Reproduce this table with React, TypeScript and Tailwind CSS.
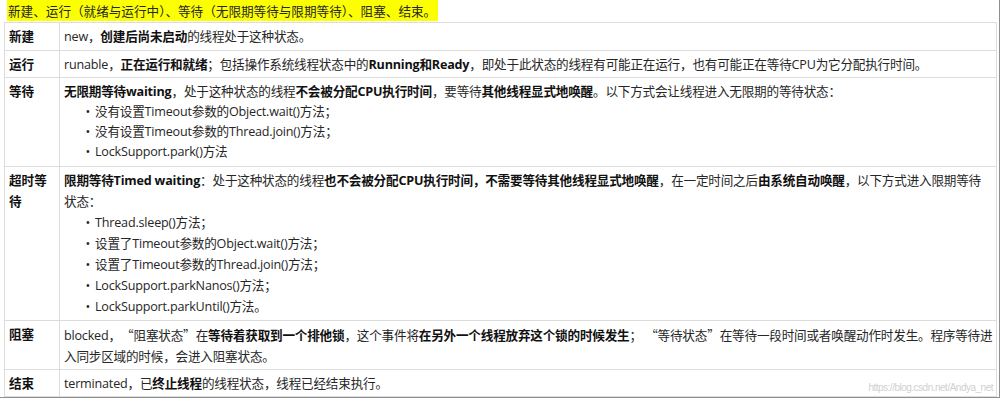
import React from "react";

const font = {
  fontFamily: '"Open Sans", "Noto Sans CJK SC", sans-serif',
};
const cjk = { fontFamily: '"Noto Sans CJK SC", sans-serif' };

function B({ children }: { children: React.ReactNode }) {
  return <b className="font-bold text-[#111]">{children}</b>;
}

function QL() {
  return (
    <span className="inline-block w-[12.6px] text-right" style={cjk}>
      “
    </span>
  );
}
function QR() {
  return (
    <span className="inline-block w-[12.6px] text-left" style={cjk}>
      ”
    </span>
  );
}

function Bullets({ items, lh }: { items: React.ReactNode[]; lh: string }) {
  return (
    <ul className={lh}>
      {items.map((it, i) => (
        <li key={i} className="flex">
          <span className="w-[31px] shrink-0 pr-[5px] text-right">•</span>
          <span>{it}</span>
        </li>
      ))}
    </ul>
  );
}

function Row({
  label,
  children,
  pad,
}: {
  label: React.ReactNode;
  children: React.ReactNode;
  pad: string;
}) {
  return (
    <div className="flex border-t border-[#dcdcdc]">
      <div className={`w-[55px] shrink-0 border-r border-[#dcdcdc] pl-[4px] pr-[4px] font-bold text-[#111] ${pad}`}>
        {label}
      </div>
      <div className={`flex-1 min-w-0 whitespace-nowrap tracking-[-0.2px] pl-[4px] pr-[3px] ${pad}`}>{children}</div>
    </div>
  );
}

export default function App() {
  return (
    <div
      className="relative w-[1000px] h-[398px] overflow-hidden bg-white border-r border-b border-[#8f8f8f] text-[12.6px] leading-[21px] text-[#262626]"
      style={font}
    >
      <div className="pl-[7px] h-[22px]">
        <span className="inline-block bg-[#fcff00] pl-[1px] pr-[2px] leading-[21px]" style={cjk}>
          新建、运行（就绪与运行中）、等待（无限期等待与限期等待）、阻塞、结束。
        </span>
      </div>
      <div className="ml-[4px] w-[993px] border-l border-r border-b border-[#dcdcdc]">
        <Row label="新建" pad="pt-[3px] pb-[3px]">
          new，<B>创建后尚未启动</B>的线程处于这种状态。
        </Row>
        <Row label="运行" pad="pt-[3px] pb-[2px]">
          runable，<B>正在运行和就绪</B>；包括操作系统线程状态中的<B>Running和Ready</B>，即处于此状态的线程有可能正在运行，也有可能正在等待CPU为它分配执行时间。
        </Row>
        <Row label="等待" pad="pt-[3px] pb-[4px]">
          <div>
            <B>无限期等待waiting</B>，处于这种状态的线程<B>不会被分配CPU执行时间</B>，要等待<B>其他线程显式地唤醒</B>。以下方式会让线程进入无限期的等待状态：
          </div>
          <Bullets
            lh="leading-[20px]"
            items={[
              "没有设置Timeout参数的Object.wait()方法；",
              "没有设置Timeout参数的Thread.join()方法；",
              "LockSupport.park()方法",
            ]}
          />
        </Row>
        <Row label="超时等待" pad="pt-[3px] pb-[3px]">
          <div>
            <B>限期等待Timed waiting</B>：处于这种状态的线程<B>也不会被分配CPU执行时间，不需要等待其他线程显式地唤醒</B>，在一定时间之后<B>由系统自动唤醒</B>，以下方式进入限期等待
            <br />
            状态：
          </div>
          <Bullets
            lh="leading-[21px]"
            items={[
              "Thread.sleep()方法；",
              "设置了Timeout参数的Object.wait()方法；",
              "设置了Timeout参数的Thread.join()方法；",
              "LockSupport.parkNanos()方法；",
              "LockSupport.parkUntil()方法。",
            ]}
          />
        </Row>
        <Row label="阻塞" pad="pt-[3px] pb-[2px]">
          blocked，<QL />阻塞状态<QR />在<B>等待着获取到一个排他锁</B>，这个事件将<B>在另外一个线程放弃这个锁的时候发生</B>； <QL />等待状态<QR />在等待一段时间或者唤醒动作时发生。程序等待进
          <br />
          入同步区域的时候，会进入阻塞状态。
        </Row>
        <Row label="结束" pad="pt-[3px] pb-[2px]">
          terminated，已<B>终止线程</B>的线程状态，线程已经结束执行。
        </Row>
      </div>
      <div
        className="absolute right-[6px] bottom-[3px] text-[10px] leading-[12px] tracking-[-0.5px] text-[#d0d0d0]"
        style={{ fontFamily: '"Liberation Sans", sans-serif' }}
      >
        https://blog.csdn.net/Andya_net
      </div>
    </div>
  );
}
